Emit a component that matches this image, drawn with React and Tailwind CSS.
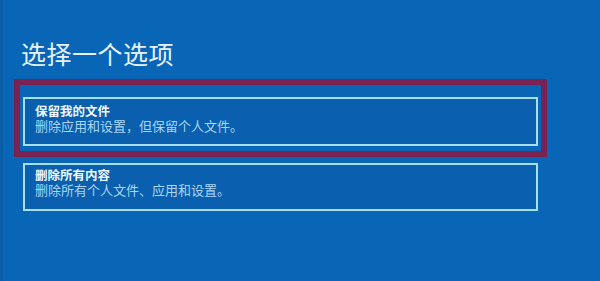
export default function App() {
  const font = { fontFamily: '"Noto Sans CJK SC", "Noto Sans", sans-serif' };
  const small = { fontFamily: '"Liberation Sans", "Noto Sans CJK SC", sans-serif' };
  return (
    <div
      className="w-[600px] h-[281px] bg-[#0966b7] border-l-[3px] border-[#0a5ea8] pl-[11px] pt-[38px] overflow-hidden"
      style={font}
    >
      <div className="text-[25px] leading-[30px] text-[#e6f2fb] tracking-[0.5px] pl-[7px]">选择一个选项</div>
      <div className="mt-[11px] w-[533px] h-[78px] border-[6px] border-[#7a2352] pt-[12px] px-[3px]">
        <div className="h-[49px] border-2 border-[#a6def4] bg-[#0a5fae] pl-[10px] pt-[6px] flex flex-col items-start" style={small}>
          <span className="text-[12.5px] leading-[14px] font-bold text-[#f0f7fd]">保留我的文件</span>
          <span className="text-[13px] leading-[15px] text-[#a8d6f5]">删除应用和设置，但保留个人文件。</span>
        </div>
      </div>
      <div className="mt-[6px] ml-[9px] w-[515px] h-[48px] border-2 border-[#a6def4] bg-[#0a5fae] pl-[10px] pt-[4px] flex flex-col items-start" style={small}>
        <span className="text-[12.5px] leading-[14px] font-bold text-[#f0f7fd]">删除所有内容</span>
        <span className="text-[13px] leading-[15px] text-[#a8d6f5]">删除所有个人文件、应用和设置。</span>
      </div>
    </div>
  );
}
